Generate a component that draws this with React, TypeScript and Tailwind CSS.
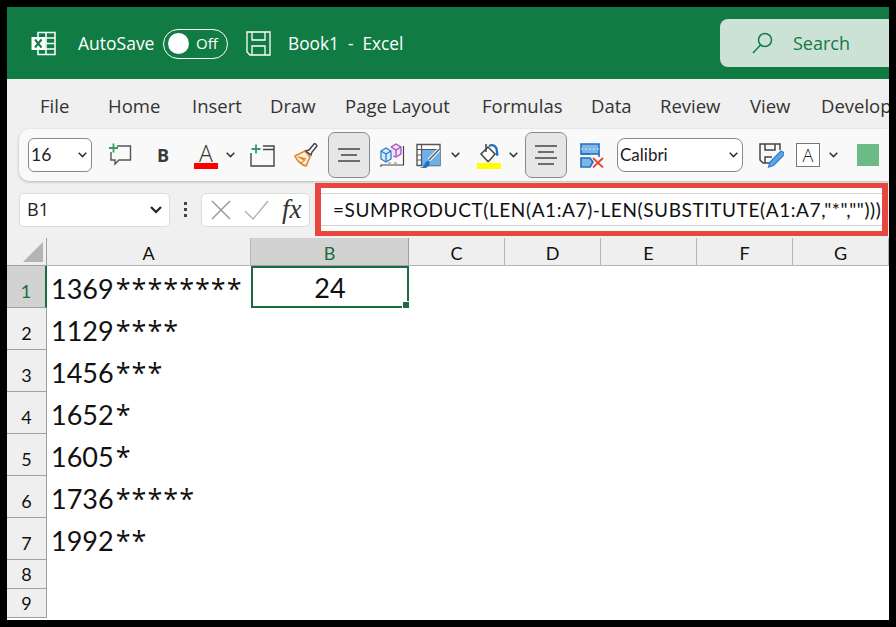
const ui = "font-['Open_Sans',sans-serif]";
const cell = "font-['Lato',sans-serif]";

const tabs = [
  { label: "File", w: "w-[29px]", ml: "ml-[33px]" },
  { label: "Home", w: "w-[53px]", ml: "ml-[39px]" },
  { label: "Insert", w: "w-[48px]", ml: "ml-[31px]" },
  { label: "Draw", w: "w-[45px]", ml: "ml-[30px]" },
  { label: "Page Layout", w: "w-[106px]", ml: "ml-[30px]" },
  { label: "Formulas", w: "w-[80px]", ml: "ml-[31px]" },
  { label: "Data", w: "w-[41px]", ml: "ml-[29px]" },
  { label: "Review", w: "w-[60px]", ml: "ml-[28px]" },
  { label: "View", w: "w-[41px]", ml: "ml-[30px]" },
  { label: "Developer", w: "w-[85px]", ml: "ml-[30px]" },
];

const rows = [
  { n: "1", digits: "1369", stars: "********" },
  { n: "2", digits: "1129", stars: "****" },
  { n: "3", digits: "1456", stars: "***" },
  { n: "4", digits: "1652", stars: "*" },
  { n: "5", digits: "1605", stars: "*" },
  { n: "6", digits: "1736", stars: "*****" },
  { n: "7", digits: "1992", stars: "**" },
];

function Chevron({ className = "" }: { className?: string }) {
  return (
    <svg className={`shrink-0 ${className}`} width="9" height="6" viewBox="0 0 9 6" fill="none" stroke="#333" strokeWidth="1.500">
      <path d="M0.700 0.800l3.800 3.800 3.800-3.800" />
    </svg>
  );
}

function ExcelLogo() {
  return (
    <svg width="25" height="25" viewBox="0 0 25 25" fill="none">
      <path d="M7 1.500h17v22H7z" stroke="#fff" strokeWidth="1.500" />
      <path d="M15 1.500v22M15 7h9M15 12.500h9M15 18h9" stroke="#fff" strokeWidth="1.500" />
      <path d="M0.500 6h14v13h-14z" fill="#fff" />
      <path d="M4 8.500l6.500 8M10.500 8.500l-6.500 8" stroke="#117b44" strokeWidth="2" />
    </svg>
  );
}

function SaveIcon() {
  return (
    <svg width="25" height="25" viewBox="0 0 25 25" fill="none" stroke="#fff" strokeWidth="1.300">
      <path d="M1 1h23v23H4l-3-3z" />
      <path d="M6 1v8h13V1M6 24v-9h13v9" />
    </svg>
  );
}

function LeftIcons() {
  return (
    <>
      <svg className="ml-[16px] shrink-0" width="24" height="24" viewBox="0 0 24 24" fill="none">
        <path d="M9 3h13.500v14H11l-4 4v-4H3V9" stroke="#555" strokeWidth="1.400" />
        <path d="M5.500 0.500v9M1 5h9" stroke="#2f9e63" strokeWidth="1.800" />
      </svg>
      <span className={`ml-[25px] w-[12px] shrink-0 text-[18px] font-bold text-[#3a3a3a] ${ui}`}>B</span>
      <div className="ml-[25px] flex w-[24px] shrink-0 flex-col items-center self-start pt-[14px]">
        <span className={`h-[20px] text-[23px] font-light leading-[20px] text-[#333] ${ui}`}>A</span>
        <span className="h-[6px] w-[24px] bg-[#ff0000]" />
      </div>
      <Chevron className="ml-[8px]" />
      <svg className="ml-[15px] shrink-0" width="25" height="23" viewBox="0 0 25 23" fill="none">
        <path d="M1 9v13h23V2H13M13 5.500h11" stroke="#444" strokeWidth="1.400" />
        <path d="M6 0.500v9M1.500 5h9" stroke="#2f9e63" strokeWidth="1.800" />
      </svg>
      <svg className="ml-[19px] shrink-0" width="24" height="24" viewBox="0 0 24 24" fill="none">
        <path d="M1 13l10-5 5 6-4 9C8 22 3 18 1 13z" fill="#fdf1e0" stroke="#e08a2c" strokeWidth="1.700" />
        <path d="M6 15l4 2M7 20l4-3M4 14l8 2" stroke="#e08a2c" strokeWidth="1.300" />
        <path d="M12 8l3-1 5-6c1-1 3 1 3 2l-5 6-1 3z" fill="#fff" stroke="#444" strokeWidth="1.500" />
      </svg>
    </>
  );
}

function MiddleIcons() {
  return (
    <>
      <svg className="ml-[10px] shrink-0" width="25" height="25" viewBox="0 0 25 25" fill="none">
        <path d="M1 8l5-3 5 3v8l-5 3-5-3z" fill="#d8ebf9" stroke="#2b7cd3" strokeWidth="1.300" />
        <path d="M6 11v8M1 8l5 3 5-3" stroke="#2b7cd3" strokeWidth="1.300" />
        <path d="M11 4l5-3 5 3v7l-5 3-3-1" fill="#f2dff5" stroke="#a64bc0" strokeWidth="1.300" />
        <path d="M11 4l5 3 5-3M16 7v6" stroke="#a64bc0" strokeWidth="1.300" />
        <path d="M23.500 3v19H1v2" stroke="#444" strokeWidth="1.200" />
        <path d="M8 20h3M14 20h3" stroke="#888" strokeWidth="1.200" />
      </svg>
      <svg className="ml-[11px] shrink-0" width="25" height="25" viewBox="0 0 25 25" fill="none">
        <path d="M1 1.500h23v21H1z" fill="#fff" stroke="#555" strokeWidth="1.400" />
        <path d="M5.500 6.500H24v16H5.500z" fill="#6cb0ec" />
        <path d="M1 6.500h23M5.500 1.500v21M1 12h4.500M1 17h4.500" stroke="#555" strokeWidth="1.200" />
        <path d="M23 6.500L13 17" stroke="#fff" strokeWidth="3.600" />
        <path d="M23 6.500L13 17" stroke="#666" strokeWidth="1.800" />
        <path d="M4 24.500c3 0 4-1 5-4s3-3 4-2 1 3-1 5-5 2-8 1z" fill="#1f6fc0" />
      </svg>
      <Chevron className="ml-[10px]" />
      <div className="ml-[17px] flex w-[24px] shrink-0 flex-col items-center self-start pt-[14px]">
        <svg width="24" height="20" viewBox="0 0 24 20" fill="none">
          <path d="M4 11l7-7 7 7-6 7-1 .500z" fill="#fff" stroke="#444" strokeWidth="1.500" />
          <path d="M9 1v8" stroke="#444" strokeWidth="1.500" />
          <path d="M12 3c4-2 8 0 8 6" stroke="#1f6fc0" strokeWidth="2.200" />
          <path d="M20 7c-1.500 3-2 5 0 6 2 0 2-3 0-6z" fill="#1f6fc0" />
        </svg>
        <span className="h-[6px] w-[24px] bg-[#ffff00]" />
      </div>
      <Chevron className="ml-[8px]" />
    </>
  );
}

export default function App() {
  return (
    <div className="flex h-[627px] w-[896px] flex-col overflow-hidden border-[7px] border-black bg-white">
      {/* title bar */}
      <div className="flex h-[72px] shrink-0 items-center bg-[#117b44] text-white">
        <div className={`ml-[24px] flex items-center pt-[1px] text-[17.500px] ${ui}`}>
          <ExcelLogo />
          <span className="ml-[22px] w-[78px]">AutoSave</span>
          <div className="ml-[7px] flex h-[30px] w-[65px] items-center rounded-full border border-white pl-[4px]">
            <span className="h-[21px] w-[21px] rounded-full bg-white" />
            <span className="ml-[7px] text-[15px]">Off</span>
          </div>
          <div className="ml-[18px]">
            <SaveIcon />
          </div>
          <span className="ml-[17px] whitespace-pre text-[17.300px]">Book1  -  Excel</span>
        </div>
        <div className="ml-auto flex h-[48px] w-[169px] items-center rounded-l-[8px] bg-[#cde2d7] pl-[32px]">
          <svg width="21" height="22" viewBox="0 0 21 22" fill="none" stroke="#117b44" strokeWidth="1.500">
            <circle cx="13" cy="8" r="6.500" />
            <path d="M8.500 13L1 21" />
          </svg>
          <span className={`ml-[20px] text-[18px] text-[#117b44] ${ui}`}>Search</span>
        </div>
      </div>

      <div className="flex h-[159px] shrink-0 flex-col bg-[#f0f0f0]">
        {/* ribbon tabs */}
        <div className={`flex h-[50px] shrink-0 items-center overflow-hidden whitespace-nowrap pt-[4px] text-[18.500px] text-[#333] ${ui}`}>
          {tabs.map((t) => (
            <span key={t.label} className={`shrink-0 ${t.w} ${t.ml}`}>
              {t.label}
            </span>
          ))}
        </div>

        {/* toolbar */}
        <div className="ml-[12px] flex h-[52px] shrink-0 items-center overflow-hidden rounded-l-[10px] bg-[#f9f9f9] pl-[9px] shadow-[0_1px_3px_rgba(0,0,0,0.25)]">
          <div className={`flex h-[34px] w-[64px] shrink-0 items-center justify-between rounded-[6px] border border-[#8a8a8a] bg-white pl-[2px] pr-[4px] text-[17.500px] text-[#222] ${cell}`}>
            16
            <Chevron />
          </div>
          <LeftIcons />
          <div className="ml-[10px] flex h-[46px] w-[42px] shrink-0 items-center justify-center rounded-[7px] border border-[#8a8a8a] bg-[#e6e6e6]">
            <svg width="22" height="14" viewBox="0 0 22 14" fill="none" stroke="#444" strokeWidth="1.500">
              <path d="M0 1h22M3 7h16M0 13h22" />
            </svg>
          </div>
          <MiddleIcons />
          <div className="ml-[7px] flex h-[46px] w-[42px] shrink-0 items-center justify-center rounded-[7px] border border-[#8a8a8a] bg-[#e6e6e6]">
            <svg width="22" height="20" viewBox="0 0 22 20" fill="none" stroke="#444" strokeWidth="1.500">
              <path d="M0 1h22M3 7h16M0 13h22M3 19h16" />
            </svg>
          </div>
          <svg className="ml-[13px] shrink-0" width="24" height="25" viewBox="0 0 24 25" fill="none">
            <path d="M1 1h18v10H1z" fill="#7db7ea" stroke="#1f6fc0" strokeWidth="1.600" />
            <path d="M1 6h18" stroke="#d7e8f7" strokeDasharray="2 2" />
            <path d="M1 11h9M1 15h9l3 4-3 5H1z" fill="#7db7ea" stroke="#1f6fc0" strokeWidth="1.600" />
            <path d="M19 11v3" stroke="#1f6fc0" strokeWidth="1.600" />
            <path d="M13 15l10 9.500M23 15l-10 9.500" stroke="#e5432f" strokeWidth="1.800" />
          </svg>
          <div className={`ml-[13px] flex h-[34px] w-[126px] shrink-0 items-center justify-between rounded-[8px] border border-[#8a8a8a] bg-white pl-[2px] pr-[4px] text-[17px] text-[#222] ${cell}`}>
            Calibri
            <Chevron />
          </div>
          <svg className="ml-[16px] shrink-0" width="25" height="25" viewBox="0 0 25 25" fill="none">
            <path d="M13 20H4l-3-3V1h20v6" stroke="#444" strokeWidth="1.500" />
            <path d="M6 1v6h10V1M6 20v-6h7" stroke="#444" strokeWidth="1.500" />
            <path d="M22 8l-11 11-1.500 5 5-1.500 11-11c-.5-2-1.500-3-3.500-3.500z" fill="#5ea5e3" stroke="#2b7cd3" strokeWidth="1.200" />
          </svg>
          <div className={`ml-[12px] flex h-[24px] w-[24px] shrink-0 items-center justify-center border border-[#777] bg-white text-[18px] font-light text-[#222] ${ui}`}>
            A
          </div>
          <Chevron className="ml-[9px]" />
          <div className="ml-[19px] h-[22px] w-[22px] shrink-0 bg-[#6cba86]" />
        </div>

        {/* formula bar */}
        <div className="mt-[2px] flex h-[53px] shrink-0 items-center pl-[12px]">
          <div className={`flex h-[34px] w-[151px] shrink-0 items-center justify-between rounded-[5px] border border-[#dcdcdc] bg-white pl-[7px] pr-[7px] text-[18px] text-[#222] ${ui}`}>
            B1
            <svg width="12" height="8" viewBox="0 0 12 8" fill="none" stroke="#222" strokeWidth="2.200">
              <path d="M1 1l5 5 5-5" />
            </svg>
          </div>
          <div className="ml-[14px] flex w-[3px] shrink-0 flex-col gap-[3px]">
            <span className="h-[3px] w-[3px] bg-[#444]" />
            <span className="h-[3px] w-[3px] bg-[#444]" />
            <span className="h-[3px] w-[3px] bg-[#444]" />
          </div>
          <div className="ml-[14px] flex h-[34px] w-[109px] shrink-0 items-center rounded-[5px] border border-[#dcdcdc] bg-white pl-[9px]">
            <svg width="20" height="20" viewBox="0 0 20 20" stroke="#9a9a9a" strokeWidth="1.500">
              <path d="M1 1l18 18M19 1L1 19" />
            </svg>
            <svg className="ml-[13px]" width="25" height="20" viewBox="0 0 25 20" fill="none" stroke="#b5b5b5" strokeWidth="1.500">
              <path d="M1 11l8 8L24 1" />
            </svg>
            <span className="ml-[13px] font-['Liberation_Serif',serif] text-[27px] font-normal italic leading-none text-[#333]">fx</span>
          </div>
          <div className="ml-[5px] flex h-[53px] w-[573px] shrink-0 items-stretch border-x-[6px] border-y-[5px] border-[#e8473f] bg-white">
            <div className={`my-[5px] flex flex-1 items-center whitespace-nowrap border-y border-[#d4d4d4] pl-[12px] pt-[2px] text-[19px] tracking-[0.6px] text-[#111] ${cell}`}>
              =SUMPRODUCT(LEN(A1:A7)-LEN(SUBSTITUTE(A1:A7,"*","")))
            </div>
          </div>
        </div>
      </div>

      {/* sheet */}
      <div className={`grid flex-1 grid-cols-[40px_204px_158px_96px_96px_96px_96px_96px] grid-rows-[28px_repeat(7,42px)_29px_29px] bg-white text-[#111] ${cell}`}>
        <div className="flex items-end justify-end border-b border-r border-[#a0a0a0] bg-[#efefef] p-[3px]">
          <span className="h-0 w-0 border-b-[20px] border-l-[20px] border-b-[#b4b4b4] border-l-transparent" />
        </div>
        {["A", "B", "C", "D", "E", "F", "G"].map((c) => (
          <div
            key={c}
            className={
              c === "B"
                ? "flex items-center justify-center border-b border-r border-[#a0a0a0] bg-[#d2d2d2] pt-[3px] text-[18px] text-[#1d6b43]"
                : "flex items-center justify-center border-b border-r border-[#b4b4b4] bg-[#efefef] pt-[3px] text-[18px]"
            }
          >
            {c}
          </div>
        ))}
        {rows.map((r) => (
          <div key={r.n} className="contents">
            <div
              className={
                r.n === "1"
                  ? "flex items-end justify-center border-b border-r-2 border-b-[#a0a0a0] border-r-[#1d6b43] bg-[#d2d2d2] pb-[2px] text-[18px] text-[#1d6b43]"
                  : "flex items-end justify-center border-b border-r border-[#a0a0a0] bg-[#efefef] pb-[2px] text-[18px]"
              }
            >
              {r.n}
            </div>
            <div className="whitespace-nowrap pl-[4px] pt-[3px] text-[27px] leading-[40px]">
              {r.digits}
              <span className={`ml-[2px] tracking-[1px] ${ui}`}>{r.stars}</span>
            </div>
            {r.n === "1" ? (
              <div className="relative flex items-center justify-center border-2 border-[#1d6b43] pt-[3px] text-[27px]">
                24
                <span className="absolute -bottom-[3px] -right-[3px] box-content h-[6px] w-[6px] border border-white bg-[#1d6b43]" />
              </div>
            ) : (
              <div />
            )}
            <div className="col-span-5" />
          </div>
        ))}
        {["8", "9"].map((n) => (
          <div key={n} className="contents">
            <div className="flex items-center justify-center border-b border-r border-[#a0a0a0] bg-[#efefef] text-[18px]">{n}</div>
            <div className="col-span-7" />
          </div>
        ))}
      </div>
    </div>
  );
}
